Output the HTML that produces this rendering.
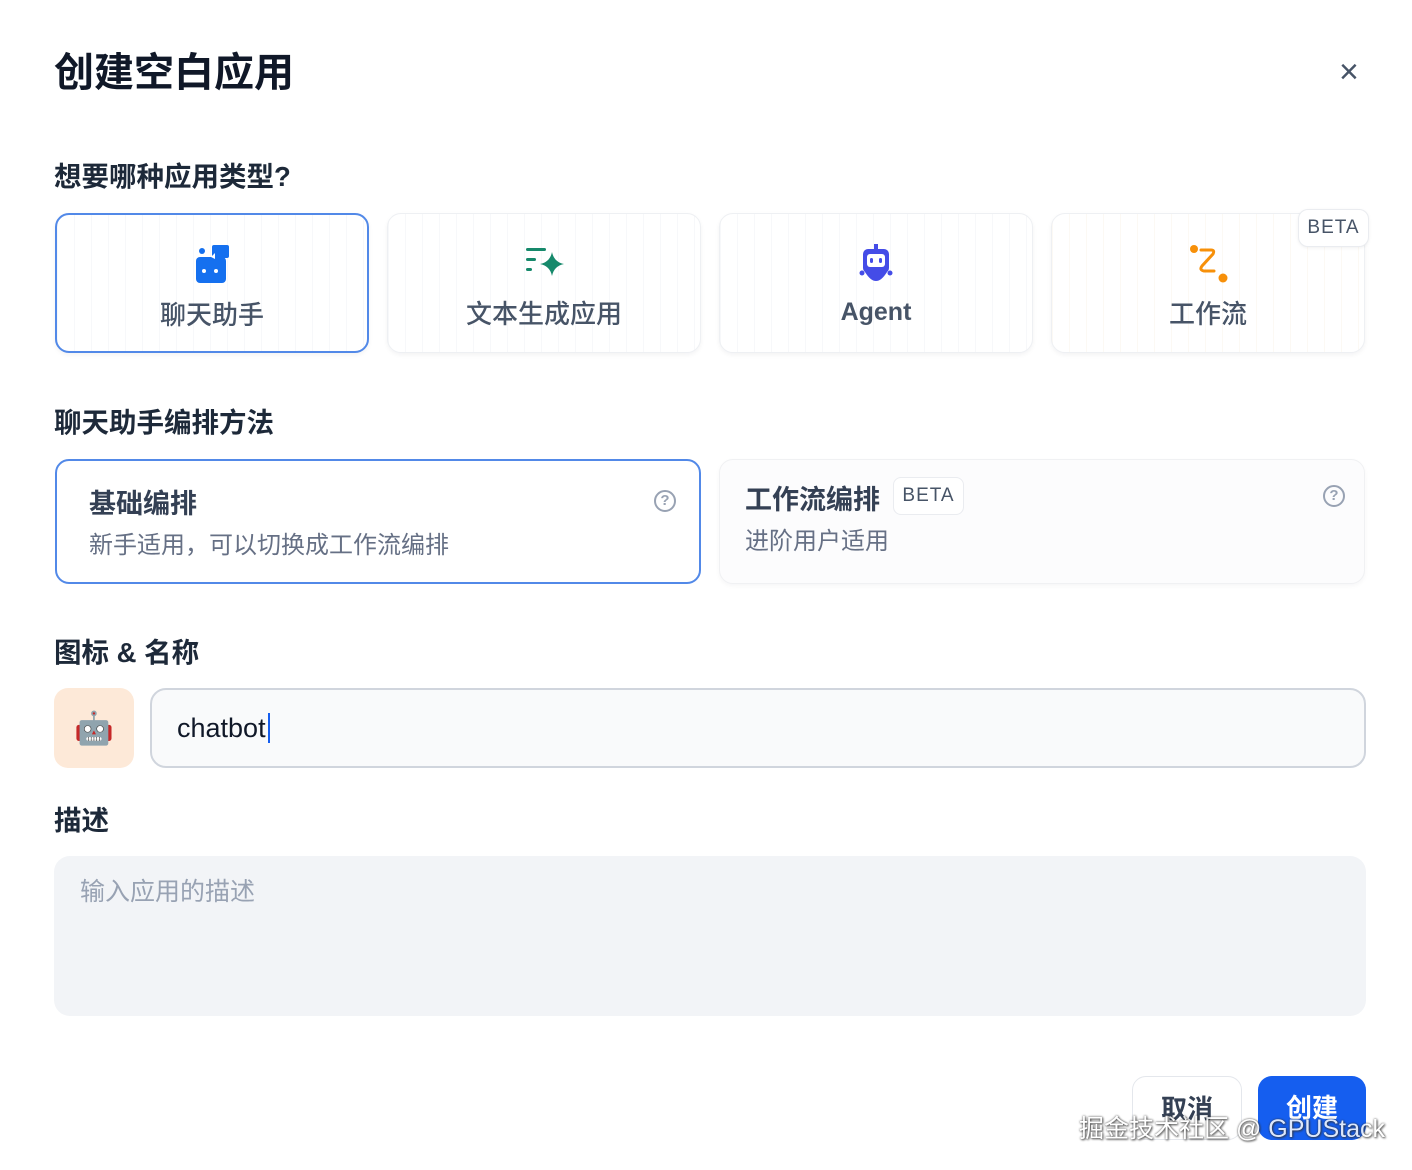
<!DOCTYPE html>
<html><head><meta charset="utf-8"><style>
*{box-sizing:border-box;margin:0;padding:0}
body{width:1412px;height:1170px;background:#fff;font-family:"Liberation Sans","Noto Sans CJK SC",sans-serif;position:relative;overflow:hidden;color:#1d2939}
.a{position:absolute}
.h{font-size:27.5px;font-weight:700;color:#1d2939}
.card{position:absolute;top:213px;width:314px;height:140px;border-radius:14px;border:1.5px solid #eef0f3;box-shadow:0 2px 5px rgba(16,24,40,.05);background:#fff;
background-image:linear-gradient(90deg,rgba(232,235,240,.35) 1px,transparent 1px);background-size:17px 100%;}
.card .lbl{position:absolute;left:0;right:0;top:80px;text-align:center;font-size:26px;font-weight:500;color:#475467}
.card svg{position:absolute;left:50%;top:30px;margin-left:-20px}
.sel{border:2.5px solid #5289e8}
.mode{position:absolute;top:459px;height:125px;width:646px;border-radius:14px;background:#fff}
.q{position:absolute;width:22px;height:22px;border:2px solid #98a2b3;border-radius:50%;font-size:15px;color:#98a2b3;text-align:center;line-height:18px;font-weight:700}
</style></head><body>
<div class="a" style="left:54px;top:40px;font-size:40px;font-weight:700;color:#101828">创建空白应用</div>
<div class="a" style="left:1339px;top:52px;font-size:34px;color:#475467;line-height:40px">×</div>
<div class="a h" style="left:54px;top:154px">想要哪种应用类型?</div>

<div class="card sel" style="left:55px"><svg width="40" height="40" viewBox="0 0 40 40"><circle cx="10" cy="6" r="3" fill="#1570ef"/><rect x="4" y="12" width="30" height="26" rx="4" fill="#1570ef"/><rect x="20" y="0" width="17" height="13" rx="2" fill="#1570ef"/><path d="M19 12 l4 -4 v6z" fill="#fff"/><circle cx="12" cy="26" r="2" fill="#fff"/><circle cx="24" cy="26" r="2" fill="#fff"/></svg><div class="lbl">聊天助手</div></div>
<div class="card" style="left:387px"><svg width="40" height="40" viewBox="0 0 40 40"><rect x="2" y="4" width="20" height="3" rx="1.5" fill="#16896b"/><rect x="2" y="14" width="10" height="3" rx="1.5" fill="#16896b"/><rect x="2" y="24" width="6" height="3" rx="1.5" fill="#16896b"/><path d="M28 8 Q30 18 40 20 Q30 22 28 32 Q26 22 16 20 Q26 18 28 8z" fill="#16896b"/></svg><div class="lbl">文本生成应用</div></div>
<div class="card" style="left:719px"><svg width="40" height="40" viewBox="0 0 40 40"><rect x="18" y="0" width="4" height="6" fill="#444ce7"/><rect x="7" y="5" width="26" height="24" rx="5" fill="#444ce7"/><rect x="11" y="10" width="18" height="13" rx="3" fill="#fff"/><rect x="14" y="14" width="3" height="5" rx="1.5" fill="#444ce7"/><rect x="23" y="14" width="3" height="5" rx="1.5" fill="#444ce7"/><path d="M9 28 Q20 46 31 28z" fill="#444ce7"/><circle cx="6" cy="29" r="2.5" fill="#444ce7"/><circle cx="34" cy="29" r="2.5" fill="#444ce7"/></svg><div class="lbl" style="font-weight:700;font-size:25px;top:84px">Agent</div></div>
<div class="card" style="left:1051px;background-image:linear-gradient(90deg,rgba(245,235,220,.3) 1px,transparent 1px)"><svg width="40" height="40" viewBox="0 0 40 40"><circle cx="6" cy="5" r="4" fill="#f79009"/><circle cx="35" cy="34" r="4.5" fill="#f79009"/><path d="M13 6 h10 q4 0 2 4 l-11 12 q-3 4 2 5 h10" stroke="#f79009" stroke-width="3" fill="none" stroke-linecap="round"/></svg><div class="lbl">工作流</div></div>
<div class="a" style="left:1298px;top:209px;width:71px;height:38px;border:1.5px solid #eaecf0;border-radius:10px;background:#fff;font-size:19px;color:#475467;text-align:center;line-height:36px;letter-spacing:1px;box-shadow:0 1px 3px rgba(0,0,0,.06)">BETA</div>

<div class="a h" style="left:54px;top:400px">聊天助手编排方法</div>
<div class="mode" style="left:55px;border:2.5px solid #5289e8">
<div class="a" style="left:32px;top:21px;font-size:27px;font-weight:700;color:#344054">基础编排</div>
<div class="a" style="left:32px;top:64px;font-size:24px;color:#667085">新手适用，可以切换成工作流编排</div>
<div class="q" style="left:597px;top:29px">?</div></div>
<div class="mode" style="left:719px;border:1.5px solid #f0f1f3;background:#fcfcfd;box-shadow:0 2px 5px rgba(16,24,40,.04)">
<div class="a" style="left:25px;top:18px;font-size:27px;font-weight:700;color:#344054">工作流编排</div>
<div class="a" style="left:173px;top:17px;width:71px;height:38px;border:1.5px solid #eaecf0;border-radius:8px;background:#fff;font-size:19px;color:#475467;text-align:center;line-height:35px;letter-spacing:1px">BETA</div>
<div class="a" style="left:25px;top:61px;font-size:24px;color:#667085">进阶用户适用</div>
<div class="q" style="left:603px;top:25px">?</div></div>

<div class="a h" style="left:54px;top:630px">图标 &amp; 名称</div>
<div class="a" style="left:54px;top:688px;width:80px;height:80px;border-radius:14px;background:#fde9d8;font-size:32px;text-align:center;line-height:80px">🤖</div>
<div class="a" style="left:150px;top:688px;width:1216px;height:80px;border:2px solid #d0d5dd;border-radius:16px;background:#f9fafb;font-size:27px;color:#101828;padding-left:25px;line-height:76px">chatbot<span style="display:inline-block;width:2px;height:30px;background:#155eef;vertical-align:middle;margin-top:-4px;margin-left:2px"></span></div>

<div class="a h" style="left:54px;top:798px">描述</div>
<div class="a" style="left:54px;top:856px;width:1312px;height:160px;border-radius:16px;background:#f2f4f7"><div class="a" style="left:26px;top:16px;font-size:25px;color:#98a2b3">输入应用的描述</div></div>

<div class="a" style="left:1132px;top:1076px;width:110px;height:64px;border:1.5px solid #e4e7ec;border-radius:14px;background:#fff;font-size:26px;font-weight:700;color:#344054;text-align:center;line-height:64px">取消</div>
<div class="a" style="left:1258px;top:1076px;width:108px;height:64px;border-radius:14px;background:#155eef;font-size:26px;font-weight:700;color:#fff;text-align:center;line-height:64px">创建</div>
<div class="a" style="left:1079px;top:1109px;font-size:25px;color:#fff;text-shadow:0 0 2px #333,1px 1px 2px #333;opacity:.85">掘金技术社区 @ GPUStack</div>
</body></html>
